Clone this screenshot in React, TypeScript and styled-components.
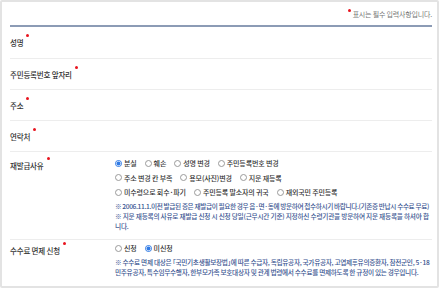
import styled, { createGlobalStyle } from "styled-components";

const GlobalStyle = createGlobalStyle`
  body {
    margin: 0;
    background: #ffffff;
    font-family: "Noto Sans CJK KR", "Noto Sans", sans-serif;
  }
`;

interface Choice {
    label: string;
    checked?: boolean;
}

const reasonRows: Choice[][] = [
    [{ label: '분실', checked: true }, { label: '훼손' }, { label: '성명 변경' }, { label: '주민등록번호 변경' }],
    [{ label: '주소 변경 칸 부족' }, { label: '용모(사진)변경' }, { label: '지문 재등록' }],
    [{ label: '미수령으로 회수·파기' }, { label: '주민등록 말소자의 귀국' }, { label: '재외국민 주민등록' }],
];

const feeChoices: Choice[] = [{ label: '신청' }, { label: '미신청', checked: true }];

const RadioGroup: React.FC<{ items: Choice[]; name: string }> = ({ items, name }) => (
    <RadioLine>
        {items.map(item => (
            <RadioLabel key={item.label}>
                <RadioInput type="radio" name={name} defaultChecked={item.checked} />
                {item.label}
            </RadioLabel>
        ))}
    </RadioLine>
);

const App = () => {
    return (
        <>
            <GlobalStyle />
            <Panel>
                <Header>
                    <RequiredMark />
                    표시는 필수 입력사항입니다.
                </Header>
                <Table>
                    <Row $height={31}>
                        <Label>성명<RequiredMark /></Label>
                        <Cell />
                    </Row>
                    <Row $height={30}>
                        <Label>주민등록번호 앞자리<RequiredMark /></Label>
                        <Cell />
                    </Row>
                    <Row $height={30}>
                        <Label>주소<RequiredMark /></Label>
                        <Cell />
                    </Row>
                    <Row $height={30}>
                        <Label>연락처<RequiredMark /></Label>
                        <Cell />
                    </Row>
                    <Row $height={87} $top>
                        <Label $top={8}>재발급사유<RequiredMark /></Label>
                        <Cell $top={4}>
                            {reasonRows.map((items, i) => (
                                <RadioGroup key={i} items={items} name="reason" />
                            ))}
                            <Notes $top={1}>
                                <Note $spacing={-0.38}>※ 2006.11.1.이전 발급된 증은 재발급이 필요한 경우 읍·면·동에 방문하여 접수하시기 바랍니다.(기존증 반납시 수수료 무료)</Note>
                                <Note $spacing={-0.22}>※ 지문 재등록의 사유로 재발급 신청 시 신청 당일(근무시간 기준) 지정하신 수령기관을 방문하여 지문 재등록을 하셔야 합니다.</Note>
                            </Notes>
                        </Cell>
                    </Row>
                    <Row $height={49} $top $last>
                        <Label $top={5}>수수료 면제 신청<RequiredMark /></Label>
                        <Cell $top={1}>
                            <RadioGroup items={feeChoices} name="fee" />
                            <Notes $top={1}>
                                <Note $spacing={-0.31}>※ 수수료 면제 대상은 「국민기초생활보장법」에 따른 수급자, 독립유공자, 국가유공자, 고엽제후유의증환자, 참전군인, 5·18 민주유공자, 특수임무수행자, 한부모가족 보호대상자 및 관계 법령에서 수수료를 면제하도록 한 규정이 있는 경우입니다.</Note>
                            </Notes>
                        </Cell>
                    </Row>
                </Table>
            </Panel>
        </>
    );
};

const Panel = styled.div`
  width: 439px;
  height: 288px;
  box-sizing: border-box;
  border: 2px solid #e3e3e3;
  border-radius: 2px;
  padding: 0 5px 0 8px;
  overflow: hidden;
`;

const Header = styled.div`
  height: 23px;
  display: flex;
  justify-content: flex-end;
  align-items: center;
  gap: 2px;
  font-size: 7px;
  color: #777777;
  letter-spacing: -0.2px;
`;

const RequiredMark = styled.span`
  display: inline-block;
  width: 3px;
  height: 3px;
  border-radius: 50%;
  background: #e8141e;
  margin-left: 3px;
  vertical-align: top;
  position: relative;
  top: -3px;
`;

const Table = styled.div`
  border-top: 2px solid #8c9bb5;
`;

const Row = styled.div<{ $height: number; $top?: boolean; $last?: boolean }>`
  display: grid;
  grid-template-columns: 105px 1fr;
  height: ${p => p.$height}px;
  align-items: ${p => (p.$top ? 'start' : 'center')};
  border-bottom: ${p => (p.$last ? 'none' : '1px solid #ededed')};
`;

const Label = styled.div<{ $top?: number }>`
  padding-top: ${p => p.$top ?? 0}px;
  font-size: 7.5px;
  line-height: 11px;
  font-weight: 500;
  color: #333333;
  letter-spacing: -0.2px;
  white-space: nowrap;
`;

const Cell = styled.div<{ $top?: number }>`
  padding-top: ${p => p.$top ?? 0}px;
`;

const RadioLine = styled.div`
  display: flex;
  gap: 8px;
  height: 14.5px;
  align-items: center;
`;

const RadioLabel = styled.label`
  display: flex;
  align-items: center;
  gap: 2px;
  font-size: 7px;
  font-weight: 500;
  color: #333333;
  letter-spacing: -0.15px;
  white-space: nowrap;
`;

const RadioInput = styled.input`
  appearance: none;
  margin: 0;
  width: 7px;
  height: 7px;
  box-sizing: border-box;
  border: 1px solid #9a9a9a;
  border-radius: 50%;
  background: #ffffff;
  &:checked {
    border-color: #2f7ae5;
    background: radial-gradient(circle, #2f7ae5 0 1.8px, #ffffff 2.2px);
  }
`;

const Notes = styled.div<{ $top?: number }>`
  margin-top: ${p => p.$top ?? 0}px;
  font-size: 6.65px;
  line-height: 10px;
  font-weight: 500;
  font-feature-settings: "palt";
  color: #3a5591;
`;

const Note = styled.p<{ $spacing: number }>`
  margin: 0;
  letter-spacing: ${p => p.$spacing}px;
`;

export default App;
